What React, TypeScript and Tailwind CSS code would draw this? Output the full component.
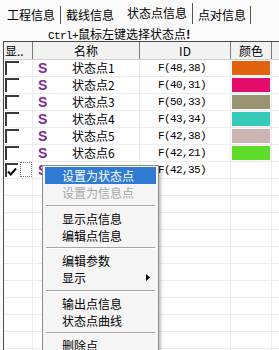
import React from 'react';

const cjk = "font-['Noto_Sans_CJK_SC','Noto_Sans',sans-serif]";
const mono = "font-['Liberation_Mono',monospace]";

const points = [
  { name: '状态点1', id: 'F(48,38)', color: '#e2620e', checked: false },
  { name: '状态点2', id: 'F(40,31)', color: '#e30c6b', checked: false },
  { name: '状态点3', id: 'F(50,33)', color: '#9a9472', checked: false },
  { name: '状态点4', id: 'F(43,34)', color: '#36cbb9', checked: false },
  { name: '状态点5', id: 'F(42,38)', color: '#cdb4b1', checked: false },
  { name: '状态点6', id: 'F(42,21)', color: '#5fdc2a', checked: false },
  // row 7 sits under the context menu, only its ID shows
  { name: '', id: 'F(42,35)', color: '', checked: true },
];

type MenuEntry = { label: string; active?: boolean; disabled?: boolean; sub?: boolean } | 'sep9' | 'sep8';

const menu: MenuEntry[] = [
  { label: '设置为状态点', active: true },
  { label: '设置为信息点', disabled: true },
  'sep9',
  { label: '显示点信息' },
  { label: '编辑点信息' },
  'sep8',
  { label: '编辑参数' },
  { label: '显示', sub: true },
  'sep9',
  { label: '输出点信息' },
  { label: '状态点曲线' },
  'sep8',
  { label: '删除点' },
];

const Checkbox: React.FC<{ checked: boolean }> = ({ checked }) => (
  <div className="w-[14px] h-[14px] border-t-2 border-l-2 border-[#3a3a3a] bg-white flex items-center justify-center">
    {checked && (
      <svg width="10" height="9" viewBox="0 0 10 9">
        <path d="M1 4.5 L3.8 7.5 L9 1.5" fill="none" stroke="#000" strokeWidth="2" />
      </svg>
    )}
  </div>
);

const App: React.FC = () => {
  const empty = Array.from({ length: 11 });

  return (
    <div className={`relative w-[279px] h-[350px] overflow-hidden bg-[#fafafa] text-black text-[12px] ${cjk}`}>
      {/* Tabs */}
      <div className="flex items-start h-[26px]">
        <div className="mt-[6px] h-[18px] w-[61px] pl-[7px] leading-[18px] border-r border-[#555]">工程信息</div>
        <div className="mt-[6px] h-[18px] w-[59px] pl-[5px] leading-[18px]">截线信息</div>
        <div className="mt-[3px] h-[21px] w-[73px] pl-[7px] leading-[20px] border-r border-[#555]">状态点信息</div>
        <div className="mt-[6px] h-[18px] w-[58px] pl-[5px] leading-[18px] border-r border-[#555]">点对信息</div>
      </div>

      {/* Hint */}
      <div className="h-[15px] pl-[48px] leading-[15px] whitespace-nowrap">
        <span className={`${mono} text-[11px] tracking-[-0.6px]`}>Ctrl+</span>
        <span>鼠标左键选择状态点</span>
        <span className="font-bold">!</span>
      </div>

      {/* Grid */}
      <div className="ml-[3px] border-l border-t border-[#4a4a4a] bg-white">
        <div className="flex h-[18px] leading-[17px] bg-[#f2f2f2] border-b border-[#d0d0d0]">
          <div className="w-[29px] pl-[1px] border-r border-[#7a7a7a]">显..</div>
          <div className="w-[107px] text-center border-r border-[#7a7a7a]">名称</div>
          <div className="w-[91px] text-center border-r border-[#7a7a7a]">ID</div>
          <div className="w-[41px] text-center border-r border-[#7a7a7a]">颜色</div>
          <div className="flex-1" />
        </div>

        {points.map((p, i) => (
          <div key={i} className="flex h-[17px] border-b border-[#ececec]">
            <div className="w-[29px] flex items-start pt-[1px] pl-[1px] gap-[2px] border-r border-[#ececec]">
              <Checkbox checked={p.checked} />
              {p.checked && <div className="w-[13px] h-[15px] -mt-[1px] border border-dotted border-[#777]" />}
            </div>
            <div className="w-[107px] flex items-center border-r border-[#ececec]">
              <span className="w-[39px] pl-[5px] font-['Liberation_Sans',sans-serif] font-bold text-[14px] text-[#7d2a90] leading-none">S</span>
              <span>{p.name}</span>
            </div>
            <div className={`w-[91px] pl-[18px] flex items-center border-r border-[#ececec] ${mono} text-[11px] tracking-[-0.6px]`}>
              {p.id}
            </div>
            <div className="w-[41px] p-[1px] border-r border-[#ececec]">
              {p.color && <div className="w-full h-full" style={{ backgroundColor: p.color }} />}
            </div>
            <div className="flex-1" />
          </div>
        ))}

        {empty.map((_, i) => (
          <div key={i} className="flex h-[17px] border-b border-[#ececec]">
            <div className="w-[29px] border-r border-[#ececec]" />
            <div className="w-[107px] border-r border-[#ececec]" />
            <div className="w-[91px] border-r border-[#ececec]" />
            <div className="w-[41px] border-r border-[#ececec]" />
            <div className="flex-1" />
          </div>
        ))}
      </div>

      {/* Context menu */}
      <div className="absolute left-[42px] top-[165px] w-[117px] px-[2px] py-[1px] bg-[#f5f5f5] border border-[#8c8c8c] shadow-[2px_2px_3px_rgba(0,0,0,0.25)]">
        {menu.map((m, i) =>
          m === 'sep9' || m === 'sep8' ? (
            <div key={i} className={`${m === 'sep9' ? 'h-[9px]' : 'h-[8px]'} flex items-center px-[1px]`}>
              <div className="w-full border-t border-[#a5a5a5] border-b border-b-white" />
            </div>
          ) : (
            <div
              key={i}
              className={`relative h-[17px] pl-[17px] leading-[17px] ${
                m.active ? 'bg-[#2f7bd3] text-white' : m.disabled ? 'text-[#a6a6a6]' : 'text-black'
              }`}
            >
              {m.label}
              {m.sub && (
                <svg className="absolute right-[6px] top-[5px]" width="4" height="7" viewBox="0 0 4 7">
                  <path d="M0 0 L4 3.5 L0 7 Z" fill="#000" />
                </svg>
              )}
            </div>
          )
        )}
      </div>
    </div>
  );
};

export default App;
